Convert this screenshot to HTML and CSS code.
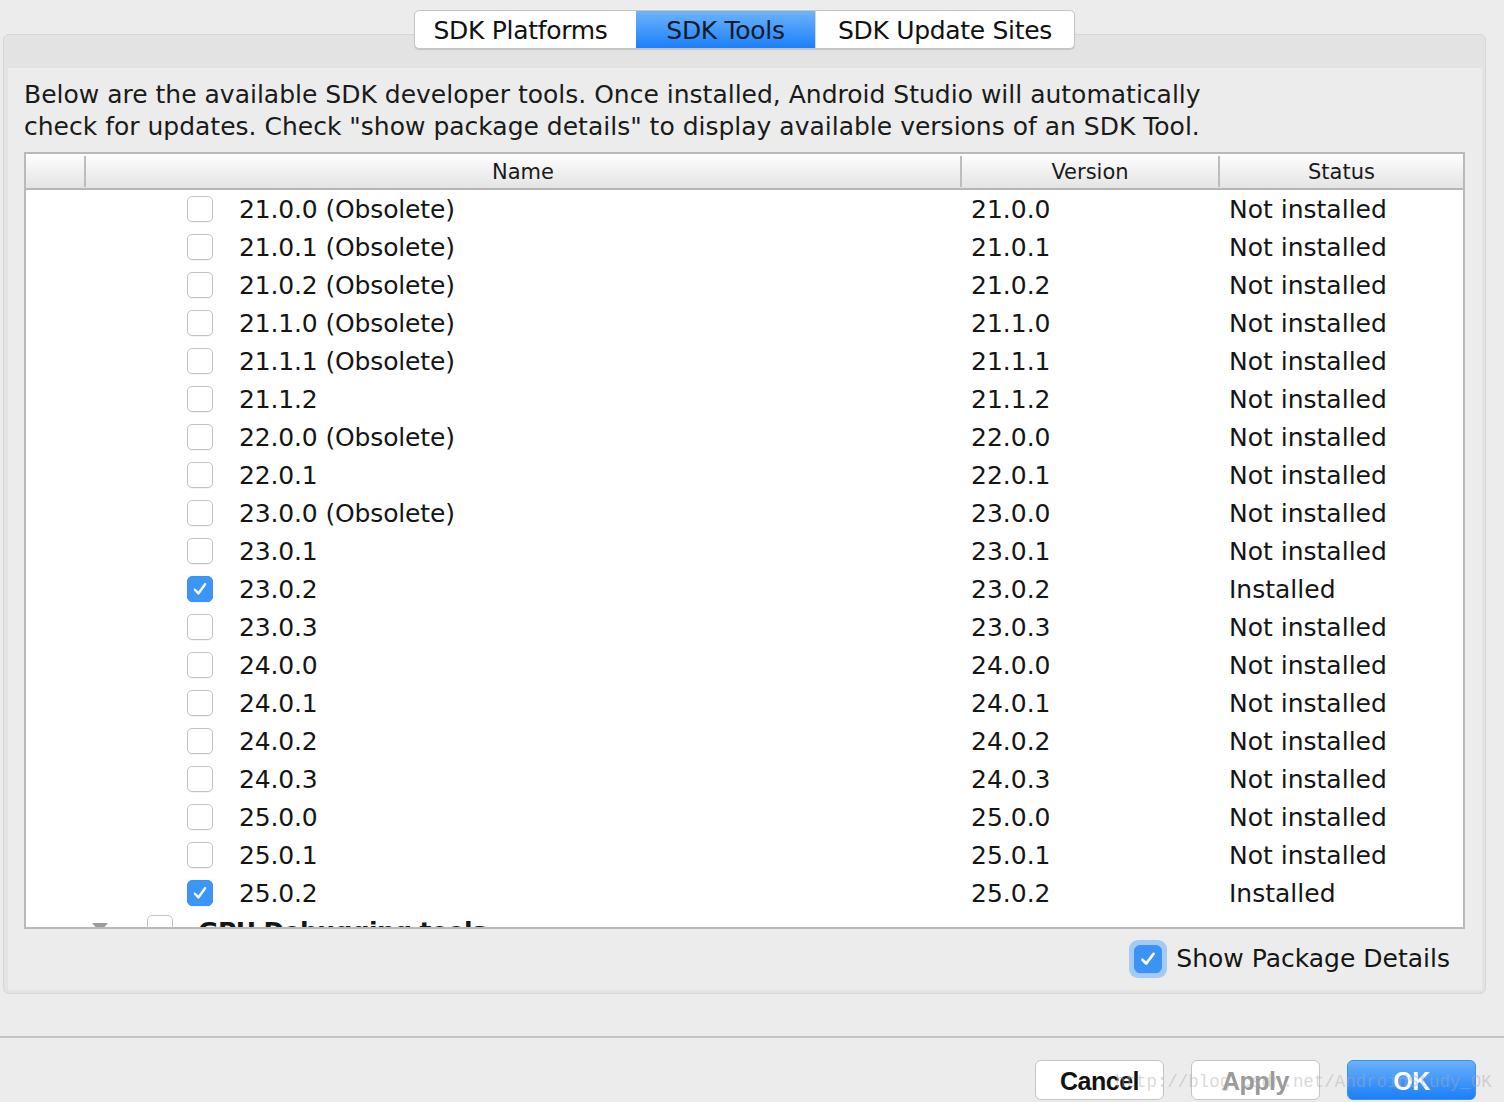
FILE: index.html
```html
<!DOCTYPE html>
<html>
<head>
<meta charset="utf-8">
<title>SDK Tools</title>
<link rel="stylesheet" href="styles.css">
</head>
<body>
<div class="tabs-row">
  <div class="tabs">
    <div class="tab tab-a">SDK Platforms</div>
    <div class="tab tab-b active">SDK Tools</div>
    <div class="tab tab-c">SDK Update Sites</div>
  </div>
</div>
<div class="panel">
  <div class="panel-top"></div>
  <div class="inner">
    <p class="desc">Below are the available SDK developer tools. Once installed, Android Studio will automatically<br>check for updates. Check "show package details" to display available versions of an SDK Tool.</p>
    <div class="table">
      <div class="thead">
        <div class="hcell"></div>
        <div class="hcell sep">Name</div>
        <div class="hcell sep">Version</div>
        <div class="hcell sep">Status</div>
      </div>
      <div class="tbody">
        <div class="row"><div></div><div class="name"><span class="cb"></span>21.0.0 (Obsolete)</div><div class="ver">21.0.0</div><div class="status">Not installed</div></div>
        <div class="row"><div></div><div class="name"><span class="cb"></span>21.0.1 (Obsolete)</div><div class="ver">21.0.1</div><div class="status">Not installed</div></div>
        <div class="row"><div></div><div class="name"><span class="cb"></span>21.0.2 (Obsolete)</div><div class="ver">21.0.2</div><div class="status">Not installed</div></div>
        <div class="row"><div></div><div class="name"><span class="cb"></span>21.1.0 (Obsolete)</div><div class="ver">21.1.0</div><div class="status">Not installed</div></div>
        <div class="row"><div></div><div class="name"><span class="cb"></span>21.1.1 (Obsolete)</div><div class="ver">21.1.1</div><div class="status">Not installed</div></div>
        <div class="row"><div></div><div class="name"><span class="cb"></span>21.1.2</div><div class="ver">21.1.2</div><div class="status">Not installed</div></div>
        <div class="row"><div></div><div class="name"><span class="cb"></span>22.0.0 (Obsolete)</div><div class="ver">22.0.0</div><div class="status">Not installed</div></div>
        <div class="row"><div></div><div class="name"><span class="cb"></span>22.0.1</div><div class="ver">22.0.1</div><div class="status">Not installed</div></div>
        <div class="row"><div></div><div class="name"><span class="cb"></span>23.0.0 (Obsolete)</div><div class="ver">23.0.0</div><div class="status">Not installed</div></div>
        <div class="row"><div></div><div class="name"><span class="cb"></span>23.0.1</div><div class="ver">23.0.1</div><div class="status">Not installed</div></div>
        <div class="row"><div></div><div class="name"><span class="cb on"><svg viewBox="0 0 26 26" width="26" height="26"><path d="M7.5 13.8 L11.2 17.8 L18.5 7.8" fill="none" stroke="#fff" stroke-width="2.6" stroke-linecap="round" stroke-linejoin="round"/></svg></span>23.0.2</div><div class="ver">23.0.2</div><div class="status">Installed</div></div>
        <div class="row"><div></div><div class="name"><span class="cb"></span>23.0.3</div><div class="ver">23.0.3</div><div class="status">Not installed</div></div>
        <div class="row"><div></div><div class="name"><span class="cb"></span>24.0.0</div><div class="ver">24.0.0</div><div class="status">Not installed</div></div>
        <div class="row"><div></div><div class="name"><span class="cb"></span>24.0.1</div><div class="ver">24.0.1</div><div class="status">Not installed</div></div>
        <div class="row"><div></div><div class="name"><span class="cb"></span>24.0.2</div><div class="ver">24.0.2</div><div class="status">Not installed</div></div>
        <div class="row"><div></div><div class="name"><span class="cb"></span>24.0.3</div><div class="ver">24.0.3</div><div class="status">Not installed</div></div>
        <div class="row"><div></div><div class="name"><span class="cb"></span>25.0.0</div><div class="ver">25.0.0</div><div class="status">Not installed</div></div>
        <div class="row"><div></div><div class="name"><span class="cb"></span>25.0.1</div><div class="ver">25.0.1</div><div class="status">Not installed</div></div>
        <div class="row"><div></div><div class="name"><span class="cb on"><svg viewBox="0 0 26 26" width="26" height="26"><path d="M7.5 13.8 L11.2 17.8 L18.5 7.8" fill="none" stroke="#fff" stroke-width="2.6" stroke-linecap="round" stroke-linejoin="round"/></svg></span>25.0.2</div><div class="ver">25.0.2</div><div class="status">Installed</div></div>
        <div class="row group"><div></div><div class="name gname"><span class="tri"></span><span class="cb"></span><span class="gtext">GPU Debugging tools</span></div><div class="ver"></div><div class="status"></div></div>
      </div>
    </div>
    <div class="opts">
      <span class="ring"><span class="cb big on"><svg viewBox="0 0 28 28" width="28" height="28"><path d="M8 14.8 L12 19 L20 8.5" fill="none" stroke="#fff" stroke-width="2.8" stroke-linecap="round" stroke-linejoin="round"/></svg></span></span>
      <span class="opt-label">Show Package Details</span>
    </div>
  </div>
</div>
<div class="divider"></div>
<div class="buttons">
  <div class="btn">Cancel</div>
  <div class="btn disabled">Apply</div>
  <div class="btn primary">OK</div>
</div>
<div class="watermark">http://blog.csdn.net/AndroidStudy_OK</div>
</body>
</html>
```
FILE: styles.css
```css
html, body {
  margin: 0;
  padding: 0;
}
body {
  background: #ececec;
  font-family: "DejaVu Sans", "Noto Sans", sans-serif;
  color: #1a1a1a;
  width: 1504px;
  height: 1102px;
  overflow: hidden;
  position: relative;
}

.tabs-row {
  display: flex;
  justify-content: center;
  width: 1483px;
  margin-left: 3px;
  padding-top: 10px;
  position: relative;
  z-index: 2;
}
.tabs {
  display: flex;
  height: 39px;
  box-sizing: border-box;
  border: 1px solid #c6c6c6;
  border-radius: 5px;
  background: #fff;
  overflow: hidden;
  box-shadow: 0 1px 1px rgba(0, 0, 0, 0.14);
}
.tab {
  font-size: 25px;
  line-height: 39px;
  text-align: center;
  color: #111;
  letter-spacing: -0.3px;
}
.tab-a { width: 221px; padding-right: 10px; box-sizing: border-box; }
.tab-b { width: 179px; }
.tab-c { width: 258px; }
.tab-c { border-left: 1px solid #d4d4d4; }
.tab.active {
  background: linear-gradient(#6db4fb, #1b80fa);
  color: #0e1a2a;
}

.panel {
  margin: -15px 18px 0 3px;
  height: 960px;
  box-sizing: border-box;
  border: 1px solid #d6d6d6;
  border-radius: 6px;
  background: #e3e3e3;
  display: flex;
  flex-direction: column;
}
.panel-top {
  height: 33px;
  flex: none;
}
.inner {
  flex: 1;
  margin: 0 3px 3px 4px;
  background: #ececec;
  padding: 10px 17px 0 16px;
  display: flex;
  flex-direction: column;
}
.desc {
  margin: 0 0 10px;
  font-size: 25px;
  line-height: 32px;
  color: #1a1a1a;
  padding-top: 1px;
  height: 63px;
}

.table {
  height: 777px;
  box-sizing: border-box;
  border: 2px solid #b9b9b9;
  background: #fff;
  overflow: hidden;
  flex: none;
}
.thead,
.row {
  display: grid;
  grid-template-columns: 58px 876px 258px 245px;
}
.thead {
  height: 36px;
  box-sizing: border-box;
  border-bottom: 2px solid #b6b6b6;
  background: linear-gradient(#fefefe, #e4e4e4);
}
.hcell {
  font-size: 21px;
  line-height: 34px;
  text-align: center;
  color: #1a1a1a;
}
.hcell.sep {
  border-left: 2px solid #bdbdbd;
  margin: 2px 0 1px;
  padding-top: 2px;
  line-height: 29px;
}

.row {
  height: 38px;
  align-items: center;
  font-size: 25px;
  color: #151515;
}
.name {
  display: flex;
  align-items: center;
  gap: 26px;
  padding-left: 103px;
  white-space: nowrap;
  letter-spacing: -0.15px;
}
.ver,
.status {
  padding-left: 11px;
  white-space: nowrap;
}
.cb {
  width: 26px;
  height: 26px;
  flex: none;
  box-sizing: border-box;
  border: 1px solid #c2c2c2;
  border-radius: 5px;
  background: #fff;
  box-shadow: 0 1px 0 rgba(0, 0, 0, 0.04);
  display: flex;
  align-items: center;
  justify-content: center;
}
.cb svg {
  display: block;
}
.cb.on {
  background: #3c96f8;
  border-color: #3a92f2;
}

.gname {
  padding-left: 8px;
  gap: 0;
}
.tri {
  width: 0;
  height: 0;
  border-left: 8px solid transparent;
  border-right: 8px solid transparent;
  border-top: 9px solid #9c9c9c;
  margin-right: 39px;
  margin-top: -8px;
}
.gname .cb {
  margin-right: 25px;
  margin-top: -6px;
}
.gtext {
  font-weight: bold;
  letter-spacing: -0.6px;
}

.opts {
  flex: 1;
  display: flex;
  align-items: center;
  justify-content: flex-end;
  padding-right: 15px;
  padding-bottom: 2px;
}
.ring {
  width: 38px;
  height: 38px;
  box-sizing: border-box;
  border-radius: 9px;
  background: #a3cbf6;
  display: flex;
  align-items: center;
  justify-content: center;
  margin-right: 9px;
}
.cb.big {
  width: 28px;
  height: 28px;
  border-radius: 6px;
  background: #3b93f5;
  border-color: #3b93f5;
}
.opt-label {
  font-size: 25px;
  color: #151515;
}

.divider {
  margin-top: 42px;
  height: 2px;
  background: #c5c5c5;
}
.buttons {
  display: flex;
  justify-content: flex-end;
  gap: 27px;
  padding-right: 28px;
  margin-top: 22px;
}
.btn {
  width: 129px;
  height: 40px;
  box-sizing: border-box;
  border: 1px solid #c4c4c4;
  border-radius: 6px;
  background: #fff;
  font-family: "Liberation Sans", Arial, sans-serif;
  font-weight: bold;
  font-size: 25px;
  line-height: 40px;
  text-align: center;
  color: #121212;
  letter-spacing: -0.5px;
}
.btn.disabled {
  color: #9a9a9a;
}
.btn.primary {
  background: linear-gradient(#6ab1fb, #1a7ff9);
  border-color: #3d8ff0;
  color: #fff;
}

.watermark {
  position: absolute;
  left: 1115px;
  top: 1071px;
  font-family: "Liberation Mono", monospace;
  font-size: 17.45px;
  line-height: 22px;
  color: rgba(170, 170, 170, 0.45);
  white-space: nowrap;
  pointer-events: none;
}
```
